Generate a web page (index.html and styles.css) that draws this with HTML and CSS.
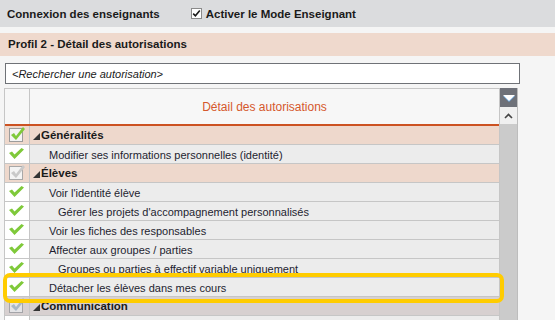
FILE: index.html
```html
<!DOCTYPE html>
<html lang="fr">
<head>
  <meta charset="UTF-8">
  <title>Détail des autorisations</title>
  <link rel="stylesheet" href="styles.css">
</head>
<body>
  <div class="topbar">
    <span class="topbar-title">Connexion des enseignants</span>
    <label class="mode-toggle">
      <svg class="tick-box" width="11" height="11" viewBox="0 0 11 11">
        <rect x="0.5" y="0.5" width="10" height="10" fill="#fff" stroke="#8a8a8a"/>
        <path d="M2.2 5.6 L4.4 7.8 L8.8 2.6" fill="none" stroke="#1a1a1a" stroke-width="1.6"/>
      </svg>
      Activer le Mode Enseignant
    </label>
  </div>

  <div class="profile-bar">Profil 2 - Détail des autorisations</div>

  <div class="search">
    <input type="text" placeholder="<Rechercher une autorisation>">
  </div>

  <div class="grid-wrap">
    <div class="grid">
      <div class="row head">
        <div class="cell-check"></div>
        <div class="cell-label">Détail des autorisations</div>
      </div>

      <!-- Généralités -->
      <div class="row group">
        <div class="cell-check">
          <svg class="box-check" width="16" height="16" viewBox="0 0 16 16">
            <rect x="0.5" y="2.5" width="13" height="13" fill="#f4f4f4" stroke="#9c9c9c"/>
            <polygon points="2,9 5,7 7,10 14,1 16,3 7,14" fill="#7fc93a"/>
          </svg>
        </div>
        <div class="cell-label"><span class="caret"></span>Généralités</div>
      </div>
      <div class="row item">
        <div class="cell-check"><svg class="check" width="15" height="11" viewBox="0 0 15 11"><polygon points="0,5 3,3.5 5.5,6.5 12.5,0 15,1.5 5.5,11" fill="#7fc93a"/></svg></div>
        <div class="cell-label">Modifier ses informations personnelles (identité)</div>
      </div>

      <!-- Élèves -->
      <div class="row group">
        <div class="cell-check">
          <svg class="box-check" width="16" height="16" viewBox="0 0 16 16">
            <rect x="0.5" y="2.5" width="13" height="13" fill="#f4f4f4" stroke="#a8a8a8"/>
            <polygon points="2,9 5,7 7,10 14,1 16,3 7,14" fill="#c9c9c9"/>
          </svg>
        </div>
        <div class="cell-label"><span class="caret"></span>Élèves</div>
      </div>
      <div class="row item">
        <div class="cell-check"><svg class="check" width="15" height="11" viewBox="0 0 15 11"><polygon points="0,5 3,3.5 5.5,6.5 12.5,0 15,1.5 5.5,11" fill="#7fc93a"/></svg></div>
        <div class="cell-label">Voir l'identité élève</div>
      </div>
      <div class="row item sub">
        <div class="cell-check"><svg class="check" width="15" height="11" viewBox="0 0 15 11"><polygon points="0,5 3,3.5 5.5,6.5 12.5,0 15,1.5 5.5,11" fill="#7fc93a"/></svg></div>
        <div class="cell-label">Gérer les projets d'accompagnement personnalisés</div>
      </div>
      <div class="row item">
        <div class="cell-check"><svg class="check" width="15" height="11" viewBox="0 0 15 11"><polygon points="0,5 3,3.5 5.5,6.5 12.5,0 15,1.5 5.5,11" fill="#7fc93a"/></svg></div>
        <div class="cell-label">Voir les fiches des responsables</div>
      </div>
      <div class="row item">
        <div class="cell-check"><svg class="check" width="15" height="11" viewBox="0 0 15 11"><polygon points="0,5 3,3.5 5.5,6.5 12.5,0 15,1.5 5.5,11" fill="#7fc93a"/></svg></div>
        <div class="cell-label">Affecter aux groupes / parties</div>
      </div>
      <div class="row item sub">
        <div class="cell-check"><svg class="check" width="15" height="11" viewBox="0 0 15 11"><polygon points="0,5 3,3.5 5.5,6.5 12.5,0 15,1.5 5.5,11" fill="#7fc93a"/></svg></div>
        <div class="cell-label">Groupes ou parties à effectif variable uniquement</div>
      </div>
      <div class="row item">
        <div class="cell-check"><svg class="check" width="15" height="11" viewBox="0 0 15 11"><polygon points="0,5 3,3.5 5.5,6.5 12.5,0 15,1.5 5.5,11" fill="#7fc93a"/></svg></div>
        <div class="cell-label">Détacher les élèves dans mes cours</div>
      </div>

      <!-- Communication -->
      <div class="row group muted">
        <div class="cell-check">
          <svg class="box-check" width="16" height="16" viewBox="0 0 16 16">
            <rect x="0.5" y="2.5" width="13" height="13" fill="#e4e4e6" stroke="#a4a4a8"/>
            <polygon points="2,9 5,7 7,10 14,1 16,3 7,14" fill="#a9b8c6"/>
          </svg>
        </div>
        <div class="cell-label"><span class="caret"></span>Communication</div>
      </div>
      <div class="row item">
        <div class="cell-check"></div>
        <div class="cell-label"></div>
      </div>
    </div>

    <div class="scrollbar">
      <div class="scroll-toggle"><span class="down-tri"></span></div>
      <div class="scroll-up">
        <svg width="9" height="6" viewBox="0 0 9 6"><path d="M1 5 L4.5 1.5 L8 5" fill="none" stroke="#444" stroke-width="1.6"/></svg>
      </div>
    </div>

    <div class="highlight"></div>
  </div>
</body>
</html>
```

FILE: styles.css
```css
* {
  margin: 0;
  padding: 0;
  box-sizing: border-box;
}

body {
  font-family: "Liberation Sans", Arial, sans-serif;
  background-color: #f5f5f5;
  color: #1e1e30;
  overflow: hidden;
  height: 320px;
}

/* Top bar */
.topbar {
  height: 27px;
  display: flex;
  align-items: center;
  padding-left: 7px;
  background-color: #dbdcde;
  font-size: 11.5px;
  font-weight: bold;
  color: #1a1a1a;
}

.mode-toggle {
  display: flex;
  align-items: center;
  margin-left: 31px;
}

.tick-box {
  margin-right: 4px;
}

.profile-bar {
  margin-top: 6px;
  height: 23px;
  line-height: 23px;
  padding-left: 8px;
  background-color: #efd9cd;
  font-size: 11.5px;
  font-weight: bold;
  color: #1a1a1a;
}

/* Search */
.search {
  margin: 7px 0 0 5px;
  width: 515px;
}

.search input {
  width: 100%;
  height: 21px;
  border: 1px solid #6f7277;
  background: #ffffff;
  padding-left: 6px;
  font-family: "Liberation Sans", Arial, sans-serif;
  font-size: 11px;
  font-style: italic;
  outline: none;
}

.search input::placeholder {
  color: #1a1a1a;
  opacity: 1;
}

/* Permissions grid */
.grid-wrap {
  position: relative;
  display: flex;
  margin: 4px 0 0 4px;
  width: 514px;
  height: 240px;
}

.grid {
  width: 496px;
  border-left: 1px solid #c6c6c6;
  border-right: 1px solid #c6c6c6;
  border-top: 1px solid #c6c6c6;
}

.row {
  display: grid;
  grid-template-columns: 25px 1fr;
  height: 19px;
  border-bottom: 1px solid #c6c6c6;
  font-size: 11px;
}

.cell-check {
  border-right: 1px solid #c6c6c6;
  position: relative;
}

.cell-label {
  display: flex;
  align-items: center;
  white-space: nowrap;
}

.row.head {
  height: 37px;
  background-color: #f7f7f7;
  border-bottom: 2px solid #cc5222;
}

.row.head .cell-label {
  justify-content: center;
  font-size: 12px;
  color: #d5582c;
  padding-top: 1px;
}

.row.group {
  background-color: #eed8cc;
  font-size: 11.5px;
  font-weight: bold;
  color: #1a1a1a;
}

.row.group.muted {
  background-color: #d7d0d0;
}

.row.group .cell-label {
  padding-left: 3px;
}

.caret {
  width: 0;
  height: 0;
  border-left: 7px solid transparent;
  border-bottom: 7px solid #333333;
  margin-right: 1px;
  margin-top: 2px;
}

.box-check {
  position: absolute;
  left: 4px;
  top: 0px;
}

.row.item {
  background-color: #ececec;
}

.row.item .cell-check {
  background-color: #ffffff;
}

.row.item .cell-label {
  padding-left: 19px;
  padding-top: 1px;
}

.row.item.sub .cell-label {
  padding-left: 28px;
}

.check {
  position: absolute;
  left: 4px;
  top: 3px;
}

/* Scrollbar */
.scrollbar {
  width: 18px;
  background-color: #cbcbcb;
  border-right: 1px solid #bdbdbd;
}

.scroll-toggle {
  height: 19px;
  background-color: #6e7179;
  display: flex;
  align-items: center;
  justify-content: center;
}

.down-tri {
  width: 0;
  height: 0;
  border-left: 6px solid transparent;
  border-right: 6px solid transparent;
  border-top: 6px solid #ffffff;
  filter: drop-shadow(0 1px 0 #6aa8e0);
}

.scroll-up {
  height: 17px;
  background-color: #f0f0f0;
  display: flex;
  align-items: center;
  justify-content: center;
}

/* Selected row highlight */
.highlight {
  position: absolute;
  left: -1px;
  top: 185px;
  width: 501px;
  height: 30px;
  border: 4px solid #ffcc00;
  border-radius: 7px;
  pointer-events: none;
}
```
